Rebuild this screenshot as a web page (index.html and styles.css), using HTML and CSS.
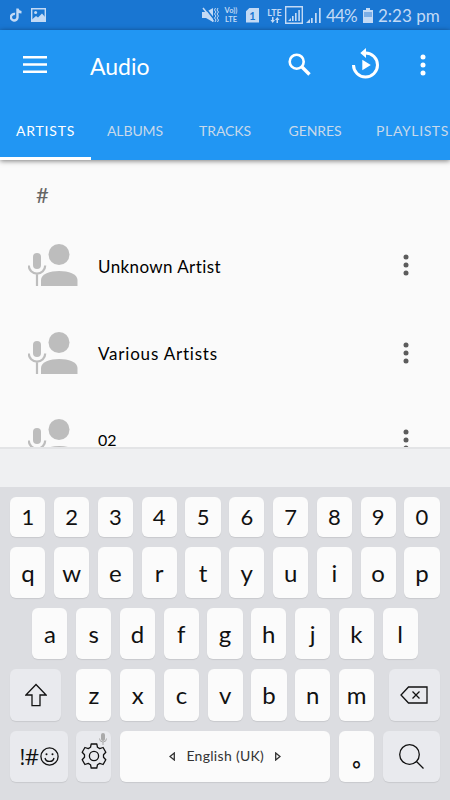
FILE: index.html
```html
<!DOCTYPE html>
<html lang="en">
<head>
<meta charset="utf-8">
<title>Audio</title>
<link rel="stylesheet" href="styles.css">
</head>
<body>
<svg class="defs" width="0" height="0">
  <symbol id="person" viewBox="0 0 50 42">
    <circle cx="31" cy="10.5" r="10.5"/>
    <path d="M13 42v-6c0-6 9-9 18.200-9s18.300 3 18.300 9v6z"/>
    <rect x="5" y="9" width="8" height="16" rx="4"/>
    <path d="M.8 21.500a8.200 8.200 0 0 0 16.400 0M9 29.500V42" fill="none" stroke="currentColor" stroke-width="2.200"/>
  </symbol>
  <symbol id="dots" viewBox="0 0 6 22">
    <circle cx="3" cy="3" r="2.500"/><circle cx="3" cy="11" r="2.500"/><circle cx="3" cy="19" r="2.500"/>
  </symbol>
</svg>
<div class="screen">
  <header class="status">
    <svg class="note" width="12" height="14" viewBox="0 0 12 14"><path d="M5 6a3.300 3.300 0 1 0 2.500 3.400V.5M7.500 1c.3 2 1.800 3.100 4 3.200" fill="none" stroke="currentColor" stroke-width="2.400"/></svg>
    <svg class="photo" width="15" height="14" viewBox="0 0 15 14"><path d="M.7.7h13.600v12.600H.7z" fill="none" stroke="currentColor" stroke-width="1.400"/><circle cx="4.600" cy="4.400" r="1.500"/><path d="M1 11.500 5 8l2 1.500L11 5.500l3.500 4V13H1z"/></svg>
    <svg class="mute" width="17" height="16" viewBox="0 0 17 16"><path d="M0 5h4L11 1v14l-7-4H0z"/><path d="m2.500 0 9.500 12" stroke="#1976d2" stroke-width="1.600"/><path d="m1 1 10.500 13.500" stroke="currentColor" stroke-width="1.500"/><path d="m13.500 1-1 2 1.500 2-1.500 2 1.500 2-1.500 2 1.500 2-1 2M16 1l-1 2 1.500 2L15 7l1.500 2-1.500 2 1.500 2-1 2" fill="none" stroke="currentColor"/></svg>
    <span class="volte"><span>Vo))</span><span>LTE</span></span>
    <span class="sim">1</span>
    <span class="lte"><span>LTE</span><svg width="10" height="6" viewBox="0 0 10 6"><path d="M2 0v3H.5L2.700 6 5 3H3.500V0zM6.500 6V3H5l2.300-3L9.500 3H8v3z"/></svg></span>
    <svg class="sig1" width="18" height="18" viewBox="0 0 18 18"><path d="M.7.7h16.600v16.600H.7z" fill="none" stroke="currentColor" stroke-width="1.400"/><path d="m3 15 3-3v3zM7 10h1.600v5H7zM10 7h1.600v8H10zM13.300 4h1.600v11h-1.600z"/></svg>
    <svg class="sig2" width="16" height="15" viewBox="0 0 16 15"><path d="m0 15 4-4v4zM5 10h1.700v5H5zM9 5h1.700v10H9zM13 0h1.700v15H13z"/></svg>
    <span class="pct">44%</span>
    <svg class="battery" width="10" height="15" viewBox="0 0 10 15"><path d="M3 0h4v2h3v13H0V2h3z"/><path d="M1 4h8v5H1z" fill="#7baee6"/></svg>
    <span class="clock">2:23 pm</span>
  </header>
  <div class="top">
    <div class="appbar">
      <svg width="24" height="18" viewBox="0 0 24 18"><path d="M0 0h24v2.600H0zM0 7.200h24v2.600H0zM0 14.400h24V17H0z"/></svg>
      <h1>Audio</h1>
      <svg class="find" width="24" height="24" viewBox="0 0 24 24"><circle cx="8.700" cy="8.700" r="7" fill="none" stroke="currentColor" stroke-width="2.600"/><path d="m14 14 7.500 7.500" stroke="currentColor" stroke-width="3.300"/></svg>
      <svg class="replay" width="28" height="31" viewBox="0 0 28 31"><path d="M1.500 17A12 12 0 1 0 13.500 5" fill="none" stroke="currentColor" stroke-width="3"/><path d="M14 0v10L8.300 5zM10.300 11.800v10.400l8.500-5.200z"/></svg>
      <svg class="more" width="6" height="22"><use href="#dots"/></svg>
    </div>
    <nav class="tabs">
      <span class="tab active">ARTISTS</span><span class="tab">ALBUMS</span><span class="tab">TRACKS</span><span class="tab">GENRES</span><span class="tab last">PLAYLISTS</span>
    </nav>
  </div>
  <main class="list">
    <div class="section">#</div>
    <div class="row"><svg class="avatar"><use href="#person"/></svg><span class="name n1">Unknown Artist</span><svg class="menu"><use href="#dots"/></svg></div>
    <div class="row"><svg class="avatar"><use href="#person"/></svg><span class="name n2">Various Artists</span><svg class="menu"><use href="#dots"/></svg></div>
    <div class="row"><svg class="avatar"><use href="#person"/></svg><span class="name n3">02</span><svg class="menu"><use href="#dots"/></svg></div>
  </main>
  <div class="suggest"></div>
  <div class="keyboard">
    <div class="keys nums"><b>1</b><b>2</b><b>3</b><b>4</b><b>5</b><b>6</b><b>7</b><b>8</b><b>9</b><b>0</b></div>
    <div class="keys"><b>q</b><b>w</b><b>e</b><b>r</b><b>t</b><b>y</b><b>u</b><b>i</b><b>o</b><b>p</b></div>
    <div class="keys home"><b>a</b><b>s</b><b>d</b><b>f</b><b>g</b><b>h</b><b>j</b><b>k</b><b>l</b></div>
    <div class="keys">
      <b class="fn shift"><svg width="22" height="24" viewBox="0 0 22 24"><path d="M11 1.500.9 12H7v10.700h8V12h6.100z" class="line"/></svg></b>
      <b>z</b><b>x</b><b>c</b><b>v</b><b>b</b><b>n</b><b>m</b>
      <b class="fn back"><svg width="28" height="18" viewBox="0 0 28 18"><path d="M8.500 1H27v16H8.500L1 9zM12.500 5.500l7 7M19.500 5.500l-7 7" class="line"/></svg></b>
    </div>
    <div class="keys">
      <b class="fn sym"><span>!#</span><svg width="19" height="19" viewBox="0 0 19 19"><circle cx="9.500" cy="9.500" r="8.600" class="line"/><path d="M5 11c1 4.500 8 4.500 9 0" class="line"/><circle cx="6.500" cy="7.200" r="1"/><circle cx="12.500" cy="7.200" r="1"/></svg></b>
      <b class="fn gear"><svg width="26" height="26" viewBox="0 0 26 26"><path class="line" stroke-linejoin="round" d="M10.200 1h5.600l.7 3.300 2.200 1.300 3.400-1.100 2.700 4.700-2.300 2.500v2.600l2.300 2.500-2.700 4.700-3.400-1.100-2.200 1.300-.7 3.300h-5.600l-.7-3.300-2.200-1.300-3.400 1.100-2.700-4.700 2.300-2.500v-2.600L1.200 9.200l2.700-4.700 3.400 1.100 2.200-1.300z"/><circle cx="13" cy="13" r="4.600" class="line"/></svg><svg class="mic" width="8" height="12" viewBox="0 0 8 12"><rect x="2" width="4" height="8" rx="2"/><path d="M.5 5.500a3.500 3.500 0 0 0 7 0M4 9v3" fill="none" stroke="currentColor"/></svg></b>
      <b class="space"><svg width="6" height="9" viewBox="0 0 6 9"><path d="M5.300 1v7L1 4.500z" class="line"/></svg><span>English (UK)</span><svg width="6" height="9" viewBox="0 0 6 9"><path d="M.7 1v7L5 4.500z" class="line"/></svg></b>
      <b class="period">。</b>
      <b class="fn go"><svg width="27" height="27" viewBox="0 0 27 27"><circle cx="11.500" cy="11.500" r="9.800" class="line"/><path d="m18.500 18.500 7 7" class="line"/></svg></b>
    </div>
  </div>
</div>
</body>
</html>
```
FILE: styles.css
```css
* { box-sizing: border-box; }
body { margin: 0; font-family: Lato, "Open Sans", sans-serif; }
svg { display: block; flex: none; fill: currentColor; }
.defs { position: absolute; }
.line { fill: none; stroke: currentColor; stroke-width: 1.3; }
.screen { width: 450px; height: 800px; overflow: hidden; display: flex; flex-direction: column; background: #fafafa; }

.status { height: 30px; flex: none; display: flex; align-items: center; background: #1976d2; color: #c3daf5; padding-left: 10px; white-space: nowrap; }
.photo { margin-left: 9px; }
.mute { margin-left: 156px; }
.volte, .lte { display: flex; flex-direction: column; align-items: center; font-weight: 700; font-size: 8px; line-height: 8px; }
.volte { width: 16px; margin-left: 4px; font-size: 7.5px; line-height: 9px; }
.sim { width: 13px; height: 15px; margin-left: 7px; background: #c3daf5; color: #1976d2; font-weight: 700; font-size: 11px; line-height: 15px; text-align: center; clip-path: polygon(30% 0, 100% 0, 100% 100%, 0 100%, 0 25%); }
.lte { width: 17px; margin-left: 7px; font-size: 9px; line-height: 9px; }
.sig1 { margin-left: 2px; }
.sig2 { margin-left: 3px; }
.pct { width: 33px; margin-left: 4px; font-size: 17px; letter-spacing: -0.8px; }
.battery { margin-left: 4px; }
.clock { margin-left: 5px; font-size: 17px; letter-spacing: 0; }

.top { position: relative; height: 130px; flex: none; background: #2196f3; color: #fff; box-shadow: 0 1px 5px rgba(0, 0, 0, .5); }
.appbar { height: 70px; display: flex; align-items: center; padding-left: 23px; }
.appbar h1 { width: 60px; margin: 2px 0 0 43px; font-size: 23px; line-height: 28px; font-weight: 400; letter-spacing: 0; }
.find { margin-left: 138px; }
.replay { margin-left: 40px; margin-bottom: 4px; }
.more { margin-left: 40px; }
.tabs { height: 60px; display: flex; overflow: hidden; }
.tab { width: 90px; flex: none; padding-top: 21px; text-align: center; font-size: 14px; line-height: 20px; color: #c8d9ea; letter-spacing: -0.1px; padding-right: 2px; }
.active { width: 91px; color: #fff; border-bottom: 3px solid #fff; letter-spacing: 0.8px; padding-right: 0; }
.last { width: 103px; padding-right: 0; letter-spacing: 0.6px; }

.list { height: 287px; flex: none; overflow: hidden; }
.section { height: 61.5px; padding: 21px 0 0 36px; font-size: 22px; line-height: 28px; color: #666; }
.row { height: 87.5px; display: flex; align-items: center; padding-left: 28px; }
.avatar { width: 50px; height: 42px; color: #bdbdbd; }
.name { width: 200px; margin-left: 20px; padding-top: 3px; font-size: 17px; line-height: 20px; color: #000; }
.n1 { letter-spacing: 0.4px; }
.n2 { letter-spacing: 0.8px; }
.n3 { padding-top: 0; font-size: 16px; line-height: 16px; }
.menu { width: 6px; height: 22px; margin-left: 105px; color: #5c5c5c; }

.suggest { height: 40px; flex: none; background: #eff0f2; border-top: 2px solid #e3e4e6; }
.keyboard { flex: 1; display: flex; flex-direction: column; gap: 10px; padding: 10px 10px 0 10.3px; background: #dcdde1; color: #111; }
.keys { height: 51.2px; flex: none; display: flex; gap: 8.6px; }
.keys b { width: 35.2px; flex: none; display: flex; align-items: center; justify-content: center; border-radius: 6px; background: #fbfbfb; box-shadow: 0 1px 1px rgba(0, 0, 0, .09); font-size: 24px; font-weight: 400; line-height: 30px; padding-top: 1px; }
.nums { height: 40px; }
.keys.nums b { font-size: 22px; padding-top: 0; }
.home { padding-left: 22px; }
.keys .fn { background: #e9eaee; padding: 0; }
.keys .shift { width: 50.8px; margin-right: 6.6px; }
.keys .back { width: 51px; margin-left: 6.2px; }
.keys .sym { width: 57.4px; gap: 1px; font-size: 22px; }
.sym span { font-family: "Open Sans", sans-serif; letter-spacing: -0.5px; }
.keys .gear { position: relative; }
.mic { position: absolute; top: 2px; right: 4px; color: #aaa; }
.keys .space { width: 210.4px; gap: 11px; font-size: 14px; padding: 0; letter-spacing: 0.3px; color: #333; }
.keys .period { font-family: "Noto Sans CJK JP", sans-serif; font-size: 22px; font-weight: 700; padding: 0 0 0 13px; }
.keys .go { width: 57.4px; }
```
